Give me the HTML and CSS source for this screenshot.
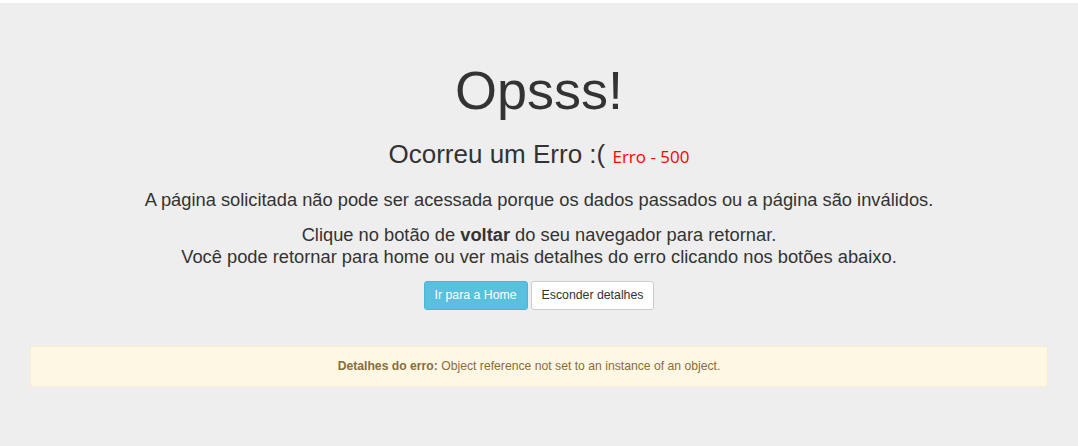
FILE: index.html
```html
<!DOCTYPE html>
<html lang="pt-BR">
<head>
<meta charset="utf-8">
<title>Erro</title>
<link rel="stylesheet" href="styles.css">
</head>
<body>
<div class="topbar"></div>
<div class="jumbotron">
  <h1 class="title">Opsss!</h1>
  <h2 class="subtitle">Ocorreu um Erro :( <span class="code">Erro - 500</span></h2>
  <p class="lead">A página solicitada não pode ser acessada porque os dados passados ou a página são inválidos.</p>
  <p class="lead">Clique no botão de <strong>voltar</strong> do seu navegador para retornar.<br>Você pode retornar para home ou ver mais detalhes do erro clicando nos botões abaixo.</p>
  <div class="actions">
    <a class="btn btn-info" href="#">Ir para a Home</a>
    <a class="btn btn-default" href="#">Esconder detalhes</a>
  </div>
  <div class="alert">
    <strong>Detalhes do erro:</strong> Object reference not set to an instance of an object.
  </div>
</div>
</body>
</html>
```
FILE: styles.css
```css
html, body {
  margin: 0;
  padding: 0;
  background: #fff;
}
body {
  font-family: "Liberation Sans", Arial, sans-serif;
  color: #333;
}
.topbar {
  height: 3px;
  background: #fff;
}
.jumbotron {
  background: #eee;
  min-height: 443px;
  box-sizing: border-box;
  padding: 58px 30px 0;
  text-align: center;
}
.title {
  font-size: 54px;
  font-weight: 400;
  line-height: 1.1;
  margin: 0;
}
.subtitle {
  font-size: 26px;
  font-weight: 400;
  line-height: 1.1;
  margin: 20px 0 0;
}
.code {
  font-family: "Open Sans", "Noto Sans", sans-serif;
  font-size: 17px;
  color: #f00;
}
.lead {
  font-size: 18.3px;
  line-height: 22.5px;
  margin: 20.5px 0 0;
}
.lead + .lead {
  margin-top: 12px;
}
.actions {
  margin-top: 12px;
  display: flex;
  justify-content: center;
  gap: 3px;
}
.btn {
  display: inline-block;
  font-size: 12.3px;
  line-height: 17px;
  padding: 5px 10px;
  border: 1px solid transparent;
  border-radius: 3px;
  text-decoration: none;
}
.btn-info {
  background: #5bc0de;
  border-color: #46b8da;
  color: #fff;
}
.btn-default {
  background: #fff;
  border-color: #ccc;
  color: #333;
}
.alert {
  margin-top: 36px;
  background: #fdf7e3;
  border: 1px solid #faebcc;
  color: #8a6d3b;
  font-size: 12.2px;
  line-height: 17px;
  padding: 11px 35px 11px 15px;
}
.alert strong {
  font-weight: 700;
}
```
